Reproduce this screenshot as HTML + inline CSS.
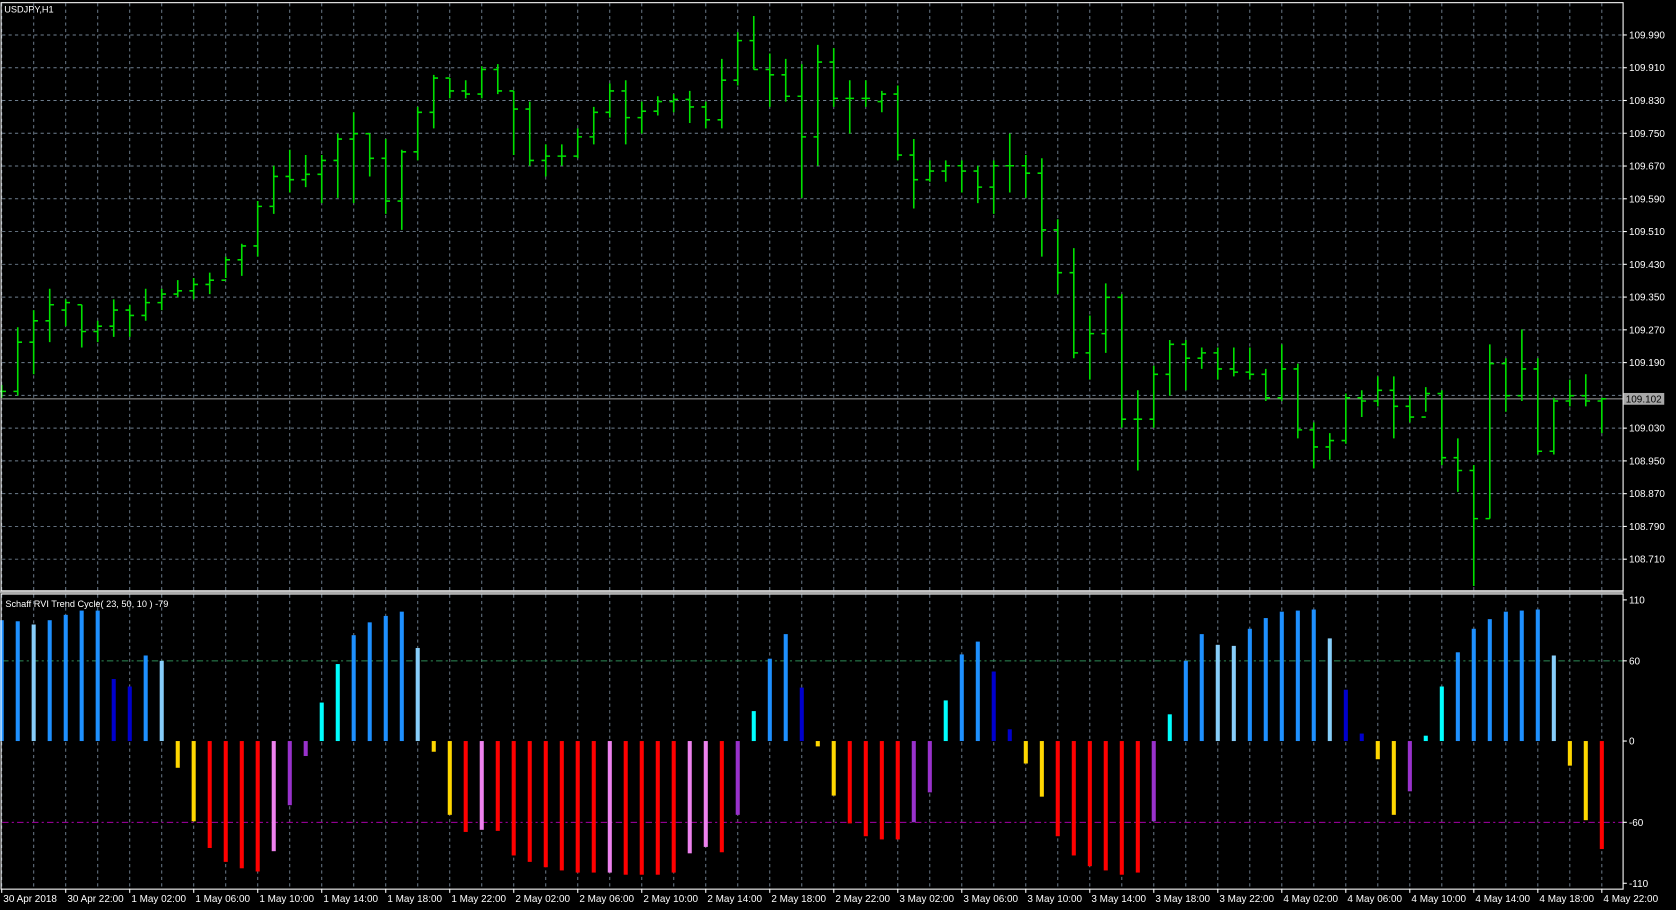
<!DOCTYPE html>
<html><head><meta charset="utf-8"><style>
html,body{margin:0;padding:0;background:#000;overflow:hidden}
svg{display:block}
text{font-family:"Liberation Sans",sans-serif;font-size:9.3px;fill:#fff}
</style></head><body>
<svg id="s" width="1676" height="910" viewBox="0 0 1568 851" preserveAspectRatio="none" xmlns="http://www.w3.org/2000/svg">
<rect x="0" y="0" width="1568" height="851" fill="#000"/>
<g id="grid"></g>
<g id="main"></g>
<g id="sub"></g>
<g id="lab"></g>
<line x1="0" y1="553.5" x2="1519" y2="553.5" stroke="#a8a8a8" stroke-width="2.5"/>
<rect x="1" y="2.5" width="1517.5" height="550" fill="none" stroke="#fff" stroke-width="1"/>
<rect x="1" y="555.5" width="1517.5" height="276" fill="none" stroke="#fff" stroke-width="1"/>
<text x="4" y="11.5" style="font-size:8.6px">USDJPY,H1</text>
<text x="5" y="567.5" style="font-size:8.6px">Schaff RVI Trend Cycle( 23, 50, 10 ) -79</text>
</svg>
<script>
var NS="http://www.w3.org/2000/svg";
function el(p,t,a,txt){var e=document.createElementNS(NS,t);for(var k in a)e.setAttribute(k,a[k]);if(txt!=null)e.textContent=txt;document.getElementById(p).appendChild(e);return e;}
function X(k){return 1.6+14.97*k;}
// grid
for(var n=0;n<=50;n++){var x=X(2*n);
 el("grid","line",{x1:x,y1:3,x2:x,y2:552,stroke:"#6f7f8f","stroke-width":0.9,"stroke-dasharray":"3,3"});
 el("grid","line",{x1:x,y1:556,x2:x,y2:831,stroke:"#6f7f8f","stroke-width":0.9,"stroke-dasharray":"3,3"});}
var prices=["109.990","109.910","109.830","109.750","109.670","109.590","109.510","109.430","109.350","109.270","109.190","109.110","109.030","108.950","108.870","108.790","108.710"];
for(var i=0;i<17;i++){var y=32.7+30.64*i;
 el("grid","line",{x1:2,y1:y,x2:1518,y2:y,stroke:"#6f7f8f","stroke-width":0.9,"stroke-dasharray":"3,3"});
 if(i!=11){el("lab","line",{x1:1518,y1:y,x2:1522,y2:y,stroke:"#fff","stroke-width":1});
 el("lab","text",{x:1524,y:y+3.3},prices[i]);}}
// current price
el("grid","line",{x1:2,y1:373,x2:1518,y2:373,stroke:"#a0a0a0","stroke-width":1});
el("lab","rect",{x:1519,y:367.5,width:38,height:11,fill:"#a8a8a8"});
el("lab","text",{x:1521,y:376.3,style:"fill:#000"},"109.102");
// sub levels
el("grid","line",{x1:2,y1:618,x2:1518,y2:618,stroke:"#2e8b57","stroke-width":0.9,"stroke-dasharray":"6,3,2,3"});
el("grid","line",{x1:2,y1:769,x2:1518,y2:769,stroke:"#c000c0","stroke-width":0.9,"stroke-dasharray":"6,3,2,3"});
[["110",561],["60",618],["0",693],["-60",769],["-110",826]].forEach(function(a){
 el("lab","line",{x1:1518,y1:a[1],x2:1522,y2:a[1],stroke:"#fff","stroke-width":1});
 el("lab","text",{x:1524,y:a[1]+3.3},a[0]);});
// time labels
var tl=["30 Apr 2018","30 Apr 22:00"];
["1","2","3","4"].forEach(function(d){["02","06","10","14","18","22"].forEach(function(h){tl.push(d+" May "+h+":00");});});
for(var m=0;m<tl.length;m++){var x=X(4*m);
 el("lab","line",{x1:x,y1:831,x2:x,y2:835,stroke:"#fff","stroke-width":1});
 el("lab","text",{x:x+1.5,y:843.5},tl[m]);}
// OHLC
var D=[[360,372,366,366],[306,370,366,320],[290,350,320,300],[270,320,300,285],[280,305,290,283],[285,325,285,310],[300,320,310,305],[280,315,305,290],[285,315,290,295],[270,300,295,283],[270,290,283,275],[262,278,275,272],[260,280,272,266],[255,275,266,262],[240,260,262,243],[228,258,243,230],[188,240,230,193],[155,200,193,165],[140,180,165,168],[145,175,168,163],[145,190,163,150],[125,185,150,130],[105,190,130,125],[125,165,125,148],[130,200,148,188],[140,215,188,142],[100,150,142,105],[70,120,105,73],[73,92,73,85],[75,92,85,88],[62,92,88,65],[60,88,65,85],[85,145,85,102],[95,155,102,150],[135,165,150,146],[135,155,146,146],[120,148,146,128],[100,135,128,105],[78,110,105,85],[75,135,85,110],[95,125,110,104],[90,108,104,95],[88,105,95,93],[85,115,93,100],[95,120,100,112],[55,120,112,75],[30,80,75,38],[15,65,38,65],[50,100,65,70],[55,95,70,90],[60,185,90,128],[42,155,128,58],[45,100,58,92],[75,125,92,92],[75,100,92,92],[85,105,95,88],[80,150,88,145],[130,195,145,168],[150,170,168,160],[150,170,160,155],[150,180,155,160],[155,190,160,175],[150,200,175,155],[125,180,155,155],[145,185,155,162],[148,240,162,215],[205,275,215,255],[232,335,255,330],[295,355,330,312],[265,330,312,278],[275,400,278,392],[365,440,392,392],[342,400,392,350],[318,370,350,322],[318,365,322,335],[325,345,335,330],[325,355,330,345],[325,352,345,348],[325,355,348,350],[345,375,350,372],[322,375,372,345],[340,410,345,402],[395,438,402,418],[405,430,418,412],[368,415,412,372],[365,390,372,375],[352,380,375,365],[352,410,365,380],[370,395,380,390],[362,385,390,368],[365,435,368,428],[410,460,428,440],[435,548,440,485],[322,485,485,340],[335,385,340,370],[308,375,370,345],[335,425,345,422],[372,425,422,375],[355,380,375,370],[350,380,370,375],[372,405,375,373]];
var p="";
D.forEach(function(b,k){var x=X(k).toFixed(1);p+="M"+x+" "+b[0]+"V"+b[1]+"M"+(X(k)-4).toFixed(1)+" "+b[2]+"H"+x+"M"+x+" "+b[3]+"H"+(X(k)+4).toFixed(1);});
el("main","path",{d:p,stroke:"#00e000","stroke-width":1.5,fill:"none"});
// sub bars
var C={b:"#1e90ff",l:"#87cefa",d:"#0000cd",c:"#00ffff",g:"#ffd700",r:"#ff0000",v:"#ee82ee",o:"#9932cc"};
var S=[[580,"b"],[581,"b"],[584,"l"],[580,"b"],[575,"b"],[571,"b"],[571,"b"],[635,"d"],[642,"d"],[613,"b"],[618,"l"],[718,"g"],[768,"g"],[793,"r"],[806,"r"],[812,"r"],[815,"r"],[796,"v"],[753,"o"],[707,"o"],[657,"c"],[621,"c"],[594,"b"],[582,"b"],[576,"b"],[572,"b"],[606,"l"],[703,"g"],[762,"g"],[778,"r"],[776,"v"],[777,"r"],[800,"r"],[806,"r"],[811,"r"],[814,"r"],[816,"r"],[816,"r"],[816,"v"],[818,"r"],[818,"r"],[818,"r"],[816,"r"],[798,"v"],[792,"v"],[797,"r"],[762,"o"],[665,"c"],[616,"b"],[593,"b"],[643,"d"],[698,"g"],[744,"g"],[770,"r"],[782,"r"],[785,"r"],[785,"r"],[769,"o"],[741,"o"],[655,"c"],[612,"b"],[600,"b"],[628,"d"],[682,"d"],[714,"g"],[745,"g"],[782,"r"],[800,"r"],[810,"r"],[814,"r"],[818,"r"],[816,"r"],[768,"o"],[668,"c"],[618,"b"],[593,"b"],[603,"l"],[604,"l"],[588,"b"],[578,"b"],[572,"b"],[571,"b"],[570,"b"],[597,"l"],[645,"d"],[686,"d"],[710,"g"],[762,"g"],[740,"o"],[688,"c"],[642,"c"],[610,"b"],[588,"b"],[579,"b"],[572,"b"],[571,"b"],[570,"b"],[613,"l"],[716,"g"],[767,"g"],[794,"r"]];
S.forEach(function(s,k){var x=X(k);el("sub","rect",{x:(x-1.9).toFixed(1),y:Math.min(s[0],693),width:3.8,height:Math.abs(s[0]-693),fill:C[s[1]]});});
</script>
</body></html>
